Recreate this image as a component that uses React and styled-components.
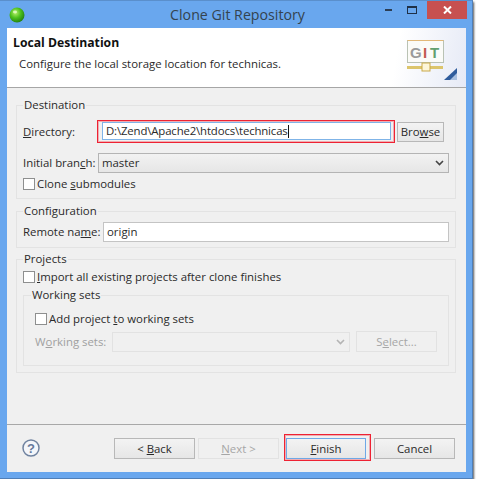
import React from 'react';
import styled, { createGlobalStyle } from 'styled-components';

const GlobalStyle = createGlobalStyle`
  html, body {
    margin: 0;
    padding: 0;
    background: #fff;
  }
  * { box-sizing: border-box; }
`;

const Frame = styled.div`
  width: 473px;
  height: 479px;
  display: flex;
  flex-direction: column;
  background: #69a7ee;
  border-top: 1px solid #5a8fcc;
  border-right: 1px solid #4f7fb8;
  border-bottom: 1px solid #4f7fb8;
  box-shadow: 1px 2px 2px rgba(30, 30, 30, 0.75);
  font-family: "Open Sans", "Noto Sans", sans-serif;
  font-size: 11.4px;
  line-height: 14px;
  color: #2a2a2a;
`;

const TitleBar = styled.div`
  height: 27px;
  display: grid;
  grid-template-columns: 1fr auto 1fr;
  align-items: start;
  flex: none;
`;

const Orb = styled.svg`
  width: 16px;
  height: 16px;
  margin: 6px 0 0 9px;
  display: block;
`;

const Title = styled.div`
  font-size: 14.2px;
  line-height: 27px;
  margin-left: 3px;
  color: #34434f;
`;

const Controls = styled.div`
  display: flex;
  justify-content: flex-end;
  align-items: flex-start;
  padding-right: 5px;
`;

const WinBtn = styled.div`
  width: 24px;
  height: 18px;
  display: flex;
  align-items: center;
  justify-content: center;
`;

const CloseBtn = styled.div`
  width: 40px;
  height: 18px;
  margin-left: 3px;
  background: #c75050;
  display: flex;
  align-items: center;
  justify-content: center;
`;

const Client = styled.div`
  flex: 1;
  margin: 0 6px 6px 7px;
  background: #f0f0f0;
  display: flex;
  flex-direction: column;
`;

const Header = styled.div`
  height: 60px;
  flex: none;
  display: flex;
  justify-content: space-between;
  background: linear-gradient(100deg, #fff 84%, #e6eaf6 100%);
  border-bottom: 1px solid #a6a6a6;
`;

const HeaderText = styled.div`
  padding: 6px 0 0 6px;
`;

const HeaderTitle = styled.div`
  font-weight: 700;
  font-size: 12.2px;
  line-height: 18px;
  color: #111;
`;

const HeaderDesc = styled.div`
  margin: 4px 0 0 6px;
  line-height: 16px;
`;

const Logo = styled.svg`
  width: 54px;
  height: 46px;
  margin: 10px 6px 0 0;
  display: block;
`;

const Main = styled.div`
  flex: 1;
  padding: 10px 10px 0 9px;
  border-bottom: 1px solid #a8a8a8;
`;

const Group = styled.fieldset`
  margin: ${p => p.$top || 0}px 0 0;
  padding: ${p => p.$pad};
  border: 1px solid #e3e3e3;
  min-width: 0;
`;

const Legend = styled.legend`
  padding: 0 1px;
  margin-left: ${p => p.$shift || 0}px;
  line-height: 14px;
`;

const Row = styled.div`
  display: flex;
  align-items: center;
  margin-top: ${p => p.$top || 0}px;
`;

const Label = styled.div`
  width: ${p => p.$w}px;
  flex: none;
  white-space: nowrap;
  color: ${p => (p.$off ? '#a0a0a0' : 'inherit')};
`;

const U = styled.span`
  text-decoration: underline;
`;

const RedBox = styled.div`
  border: 1px solid #ee2233;
  box-shadow: inset 0 0 0 1px rgba(238, 48, 64, 0.35);
  display: flex;
  flex: none;
  padding: ${p => p.$pad};
  margin: ${p => p.$margin || 0};
`;

const TextBox = styled.div`
  height: ${p => p.$h}px;
  width: ${p => (p.$w ? `${p.$w}px` : 'auto')};
  flex: ${p => (p.$w ? 'none' : 1)};
  background: #fff;
  border: 1px solid ${p => (p.$focus ? '#7fb4e8' : '#c4c4c4')};
  padding-left: 3px;
  line-height: ${p => p.$h - 2}px;
  letter-spacing: ${p => (p.$focus ? '-0.15px' : '0')};
`;

const Caret = styled.span`
  display: inline-block;
  width: 1px;
  height: 13px;
  background: #111;
  vertical-align: -3px;
`;

const Dropdown = styled.div`
  height: 20px;
  flex: ${p => (p.$w ? 'none' : 1)};
  width: ${p => (p.$w ? `${p.$w}px` : 'auto')};
  display: flex;
  align-items: center;
  justify-content: space-between;
  padding: 0 4px 0 3px;
  border: 1px solid ${p => (p.$off ? '#e2e2e2' : '#b4b4b4')};
  background: ${p => (p.$off ? '#f0f0f0' : 'linear-gradient(#f2f2f2, #e6e6e6)')};
`;

const Chevron = styled.svg`
  width: 9px;
  height: 6px;
  display: block;
`;

const Check = styled.div`
  width: 12px;
  height: 12px;
  flex: none;
  margin-right: 2px;
  background: #fff;
  border: 1px solid #8e8f8f;
`;

const Button = styled.div`
  width: ${p => p.$w}px;
  height: ${p => p.$h || 21}px;
  flex: none;
  margin-left: ${p => p.$left || 0}px;
  display: flex;
  align-items: center;
  justify-content: center;
  color: ${p => (p.$off ? '#a6a6a6' : 'inherit')};
  border: 1px solid ${p => (p.$off ? '#e2e2e2' : p.$focus ? '#6fa8e6' : '#b8b8b8')};
  background: ${p => (p.$off ? '#f0f0f0' : 'linear-gradient(#f3f3f3, #e6e6e6)')};
`;

const Footer = styled.div`
  height: 47px;
  flex: none;
  display: flex;
  align-items: flex-start;
  padding: 13px 11px 0 15px;
`;

const Help = styled.svg`
  width: 18px;
  height: 18px;
  margin: 1px auto 0 0;
  display: block;
`;

function ChevronDown({ color }) {
  return (
    <Chevron viewBox="0 0 9 6">
      <path d="M1 1l3.5 3.5L8 1" fill="none" stroke={color} strokeWidth="1.6" />
    </Chevron>
  );
}

export default function App() {
  return (
    <>
      <GlobalStyle />
      <Frame>
        <TitleBar>
          <Orb viewBox="0 0 16 16">
            <defs>
              <radialGradient id="orb" cx="0.4" cy="0.35" r="0.7">
                <stop offset="0" stopColor="#b6f06a" />
                <stop offset="0.5" stopColor="#4cc01c" />
                <stop offset="1" stopColor="#1f7c10" />
              </radialGradient>
            </defs>
            <circle cx="8" cy="8" r="7.5" fill="url(#orb)" />
            <ellipse cx="6" cy="5" rx="2" ry="1.4" fill="#eaffd0" opacity="0.8" />
          </Orb>
          <Title>Clone Git Repository</Title>
          <Controls>
            <WinBtn>
              <svg width="9" height="4" viewBox="0 0 9 4">
                <rect x="1" y="1" width="7" height="2" fill="#2c3e55" />
              </svg>
            </WinBtn>
            <WinBtn>
              <svg width="10" height="8" viewBox="0 0 10 8">
                <rect x="0.5" y="0.5" width="9" height="7" fill="none" stroke="#1f3047" />
                <rect x="0" y="0" width="10" height="2" fill="#1f3047" />
              </svg>
            </WinBtn>
            <CloseBtn>
              <svg width="9" height="8" viewBox="0 0 9 8">
                <path d="M1 0.5l7 7M8 0.5l-7 7" stroke="#fff" strokeWidth="2" />
              </svg>
            </CloseBtn>
          </Controls>
        </TitleBar>
        <Client>
          <Header>
            <HeaderText>
              <HeaderTitle>Local Destination</HeaderTitle>
              <HeaderDesc>Configure the local storage location for technicas.</HeaderDesc>
            </HeaderText>
            <Logo viewBox="0 0 54 46">
              <rect x="1.5" y="2.5" width="36" height="22" fill="#fbfbf8" stroke="#b9c2b4" />
              <path d="M1.5 2.5h36" stroke="#e2b878" />
              <text x="4" y="20" fontFamily="Liberation Sans, sans-serif" fontWeight="700" fontSize="15" fill="#9a9a9a">G</text>
              <text x="17" y="20" fontFamily="Liberation Sans, sans-serif" fontWeight="700" fontSize="15" fill="#c25b50">I</text>
              <text x="24" y="20" fontFamily="Liberation Sans, sans-serif" fontWeight="700" fontSize="15" fill="#63a070">T</text>
              <rect x="1" y="28" width="36" height="3" fill="#dcc56c" />
              <rect x="16" y="25" width="8" height="8" fill="#fdf6d8" stroke="#c9a94a" />
              <path d="M38 42h13V30z" fill="#2f5c9c" />
              <path d="M44 42h7v-7z" fill="#a9c0e0" />
            </Logo>
          </Header>
          <Main>
            <Group $pad="8px 6px 7px">
              <Legend>Destination</Legend>
              <Row>
                <Label $w={74}><U>D</U>irectory:</Label>
                <RedBox $pad="1px 3px 2px 4px">
                  <TextBox $w={289} $h={18} $focus>
                    D:\Zend\Apache2\htdocs\technicas<Caret />
                  </TextBox>
                </RedBox>
                <Button $w={47} $h={20} $left={2}><span>Bro<U>w</U>se</span></Button>
              </Row>
              <Row $top={10}>
                <Label $w={75}><span>Initial bran<U>c</U>h:</span></Label>
                <Dropdown>
                  master
                  <ChevronDown color="#444" />
                </Dropdown>
              </Row>
              <Row $top={4}>
                <Check />
                <span>Clone <U>s</U>ubmodules</span>
              </Row>
            </Group>
            <Group $top={5} $pad="4px 6px 5px">
              <Legend>Configuration</Legend>
              <Row>
                <Label $w={80}><span>Remote na<U>m</U>e:</span></Label>
                <TextBox $h={20}>origin</TextBox>
              </Row>
            </Group>
            <Group $top={4} $pad="4px 6px 6px">
              <Legend>Projects</Legend>
              <Row>
                <Check />
                <span><U>I</U>mport all existing projects after clone finishes</span>
              </Row>
              <Group $top={4} $pad="10px 11px 13px">
                <Legend $shift={-4}>Working sets</Legend>
                <Row>
                  <Check />
                  <span>Add project <U>t</U>o working sets</span>
                </Row>
                <Row $top={5}>
                  <Label $w={77} $off>W<U>o</U>rking sets:</Label>
                  <Dropdown $w={238} $off>
                    <span />
                    <ChevronDown color="#b4b4b4" />
                  </Dropdown>
                  <Button $w={81} $left={6} $off><span>S<U>e</U>lect...</span></Button>
                </Row>
              </Group>
            </Group>
          </Main>
          <Footer>
            <Help viewBox="0 0 18 18">
              <circle cx="9" cy="9" r="8" fill="#f4f6fa" stroke="#7083a0" strokeWidth="1.5" />
              <text x="9" y="13.5" textAnchor="middle" fontFamily="Liberation Sans, sans-serif" fontWeight="700" fontSize="13" fill="#66799a">?</text>
            </Help>
            <Button $w={81}><span>&lt; <U>B</U>ack</span></Button>
            <Button $w={81} $left={3} $off><span><U>N</U>ext &gt;</span></Button>
            <RedBox $pad="3px 4px 1px 1px" $margin="-4px 0 0 5px">
              <Button $w={80} $focus><span><U>F</U>inish</span></Button>
            </RedBox>
            <Button $w={81} $left={3}>Cancel</Button>
          </Footer>
        </Client>
      </Frame>
    </>
  );
}
